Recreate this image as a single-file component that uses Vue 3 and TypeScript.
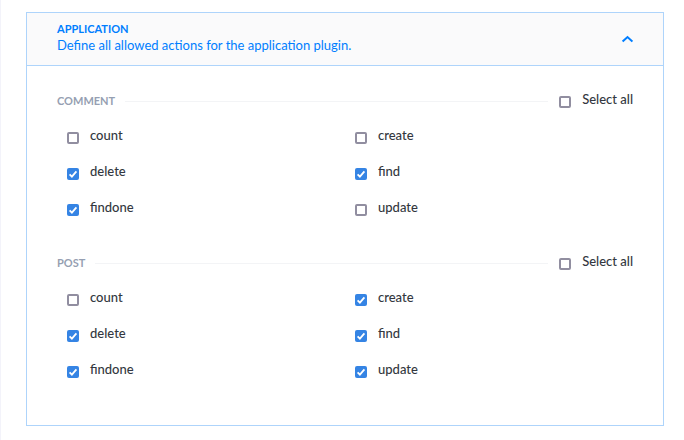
<script setup lang="ts">
import { reactive, ref } from 'vue'

interface Action {
  name: string
  enabled: boolean
}

interface Controller {
  name: string
  actions: Action[]
}

const open = ref(true)

const build = (name: string, enabled: string[]): Controller => ({
  name,
  actions: ['count', 'create', 'delete', 'find', 'findone', 'update'].map((action) => ({
    name: action,
    enabled: enabled.includes(action),
  })),
})

const controllers = reactive<Controller[]>([
  build('comment', ['delete', 'find', 'findone']),
  build('post', ['create', 'delete', 'find', 'findone', 'update']),
])

const allSelected = (controller: Controller): boolean =>
  controller.actions.every((action) => action.enabled)

const toggleAll = (controller: Controller, event: Event): void => {
  const checked = (event.target as HTMLInputElement).checked
  controller.actions.forEach((action) => {
    action.enabled = checked
  })
}
</script>

<template>
  <main class="page">
    <section class="panel">
      <button class="panel-header" type="button" :aria-expanded="open" @click="open = !open">
        <span class="heading">
          <span class="plugin">Application</span>
          <span class="description">Define all allowed actions for the application plugin.</span>
        </span>
        <svg class="chevron" :class="{ closed: !open }" viewBox="0 0 12 8" aria-hidden="true">
          <path d="M1.6 6.6 6.5 2l4.9 4.6" />
        </svg>
      </button>
      <div v-if="open" class="panel-body">
        <section v-for="controller in controllers" :key="controller.name" class="controller">
          <div class="controller-header">
            <h2 class="controller-name">{{ controller.name }}</h2>
            <span class="rule"></span>
            <label class="option">
              <input
                class="box"
                type="checkbox"
                :checked="allSelected(controller)"
                @change="toggleAll(controller, $event)"
              />
              <span>Select all</span>
            </label>
          </div>
          <div class="actions">
            <label v-for="action in controller.actions" :key="action.name" class="option">
              <input v-model="action.enabled" class="box" type="checkbox" />
              <span>{{ action.name }}</span>
            </label>
          </div>
        </section>
      </div>
    </section>
  </main>
</template>

<style>
body {
  margin: 0;
  background: #fff;
}
</style>

<style scoped>
.page {
  box-sizing: border-box;
  min-height: 100vh;
  padding: 12px 20px 14px 25px;
  border-left: 1px solid #f3f3fa;
  font-family: Lato, 'Open Sans', sans-serif;
  font-size: 13px;
  line-height: 18px;
  color: #333740;
}

.panel {
  border: 1px solid #aed4fb;
}

.panel-header {
  display: flex;
  align-items: center;
  justify-content: space-between;
  box-sizing: border-box;
  width: 100%;
  padding: 8px 30px 12px;
  border: 0;
  background: #fafafb;
  color: #007eff;
  font: inherit;
  text-align: left;
  cursor: pointer;
}

.heading {
  display: flex;
  flex-direction: column;
  line-height: 16px;
}

.plugin {
  font-size: 11px;
  font-weight: 700;
  text-transform: uppercase;
}

.chevron {
  width: 12px;
  height: 8px;
  margin-top: 4px;
  fill: none;
  stroke: currentColor;
  stroke-width: 2;
}

.chevron.closed {
  transform: rotate(180deg);
}

.panel-body {
  padding: 16px 30px 37px;
  border-top: 1px solid #aed4fb;
}

.controller + .controller {
  margin-top: 18px;
}

.controller-header {
  display: flex;
  align-items: center;
}

.controller-name {
  margin: 0;
  padding-top: 2px;
  font-size: 11px;
  font-weight: 700;
  color: #969fb2;
  text-transform: uppercase;
}

.rule {
  flex: 1;
  height: 1px;
  margin: 2px 11px 0 10px;
  background: #f3f4f6;
}

.actions {
  display: grid;
  grid-template-columns: 1fr 1fr;
  padding-left: 10px;
  column-gap: 10px;
}

.option {
  display: flex;
  align-items: center;
  gap: 11px;
  box-sizing: border-box;
  height: 36px;
  padding-bottom: 2px;
  font-weight: 500;
  cursor: pointer;
}

.box {
  appearance: none;
  box-sizing: border-box;
  width: 12px;
  height: 12px;
  margin: 6px 0 0;
  border: 2px solid #918ea0;
  border-radius: 2px;
  background: #fff;
}

.box:checked {
  border: 0;
  background: #3584e4
    url("data:image/svg+xml,%3Csvg xmlns='http://www.w3.org/2000/svg' viewBox='0 0 12 12'%3E%3Cpath d='M2.6 6.3 4.9 8.6 9.4 3.4' fill='none' stroke='white' stroke-width='1.8'/%3E%3C/svg%3E")
    center / 12px 12px no-repeat;
}
</style>
